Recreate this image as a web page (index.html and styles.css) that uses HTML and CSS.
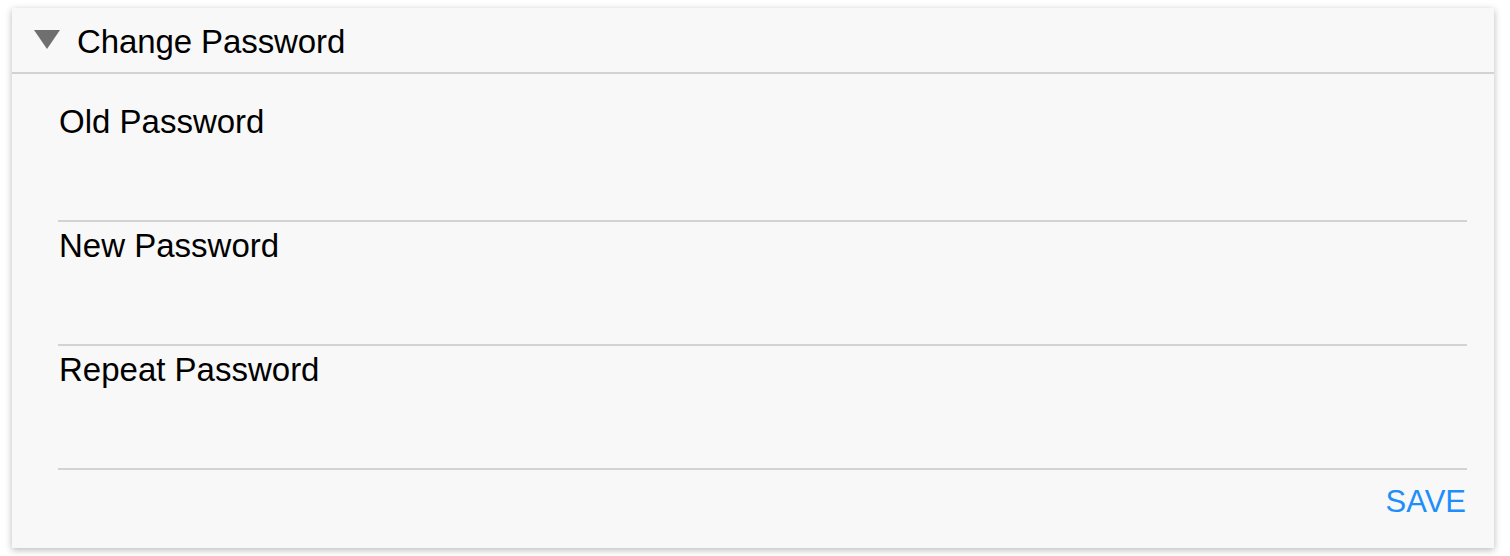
FILE: index.html
```html
<!DOCTYPE html>
<html lang="en">
<head>
<meta charset="utf-8">
<title>Change Password</title>
<link rel="stylesheet" href="styles.css">
</head>
<body>
<section class="card">
  <header class="card-header">
    <svg class="caret" width="26" height="19" viewBox="0 0 26 19" aria-hidden="true"><polygon points="0,0 26,0 13,19" fill="#6f6f6f"/></svg>
    <h2 class="card-title">Change Password</h2>
  </header>
  <form class="card-body">
    <label class="field">
      <span class="field-label">Old Password</span>
      <input class="field-input" type="password">
    </label>
    <label class="field">
      <span class="field-label">New Password</span>
      <input class="field-input" type="password">
    </label>
    <label class="field">
      <span class="field-label">Repeat Password</span>
      <input class="field-input" type="password">
    </label>
    <div class="actions">
      <button type="button" class="save-btn">SAVE</button>
    </div>
  </form>
</section>
</body>
</html>
```
FILE: styles.css
```css
html, body {
  margin: 0;
  padding: 0;
  background: #ffffff;
}
body {
  padding: 8px 16px 8px 12px;
  font-family: "Liberation Sans", Arial, sans-serif;
  color: #000;
}
.card {
  width: 1482px;
  height: 540px;
  box-sizing: border-box;
  background: #f8f8f8;
  box-shadow: 0 2px 7px rgba(0, 0, 0, 0.28);
  display: flex;
  flex-direction: column;
}
.card-header {
  height: 66px;
  box-sizing: border-box;
  border-bottom: 2px solid #d3d3d3;
  display: flex;
  align-items: center;
  padding: 4px 0 0 22px;
}
.caret {
  display: block;
  align-self: flex-start;
  margin: 18px 17px 0 0;
}
.card-title {
  margin: 0;
  font-size: 33px;
  font-weight: normal;
  line-height: 40px;
  letter-spacing: -0.1px;
}
.card-body {
  margin: 0;
  padding: 24px 27px 0 46px;
  display: flex;
  flex-direction: column;
}
.field {
  display: flex;
  flex-direction: column;
  padding-top: 4px;
  border-bottom: 2px solid #d3d3d3;
}
.field-label {
  font-size: 33px;
  line-height: 40px;
  height: 40px;
  padding-left: 1px;
}
.field-input {
  height: 78px;
  border: 0;
  background: transparent;
  outline: none;
  padding: 0;
  margin: 0;
  font-size: 28px;
}
.actions {
  display: flex;
  justify-content: flex-end;
  padding-top: 14px;
}
.save-btn {
  border: 0;
  background: transparent;
  color: #1e8ffa;
  font-family: "Liberation Sans", Arial, sans-serif;
  font-size: 31px;
  line-height: 36px;
  padding: 0 1px 0 0;
  cursor: pointer;
}
```
